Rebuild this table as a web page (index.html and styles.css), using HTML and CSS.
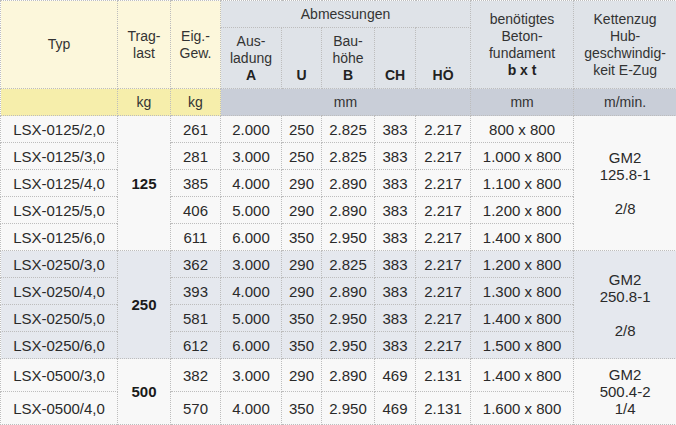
FILE: index.html
```html
<!DOCTYPE html>
<html lang="de">
<head>
<meta charset="utf-8">
<title>LSX Tabelle</title>
<link rel="stylesheet" href="styles.css">
</head>
<body>
<table class="spec">
  <colgroup>
    <col class="c-typ"><col class="c-trag"><col class="c-eig"><col class="c-a"><col class="c-u"><col class="c-b"><col class="c-ch"><col class="c-ho"><col class="c-bxt"><col class="c-kz">
  </colgroup>
  <thead>
    <tr class="h1">
      <th class="y" rowspan="2">Typ</th>
      <th class="y" rowspan="2">Trag-<br>last</th>
      <th class="y" rowspan="2">Eig.-<br>Gew.</th>
      <th class="g" colspan="5">Abmessungen</th>
      <th class="g" rowspan="2">benötigtes<br>Beton-<br>fundament<br><b>b x t</b></th>
      <th class="g" rowspan="2">Kettenzug<br>Hub-<br>geschwindig-<br>keit E-Zug</th>
    </tr>
    <tr class="h2">
      <th class="g bot">Aus-<br>ladung<br><b>A</b></th>
      <th class="g bot"><b>U</b></th>
      <th class="g bot">Bau-<br>höhe<br><b>B</b></th>
      <th class="g bot"><b>CH</b></th>
      <th class="g bot"><b>HÖ</b></th>
    </tr>
    <tr class="units">
      <th class="yu"></th>
      <th class="yu">kg</th>
      <th class="yu">kg</th>
      <th class="gu" colspan="5">mm</th>
      <th class="gu">mm</th>
      <th class="gu">m/min.</th>
    </tr>
  </thead>
  <tbody class="light">
    <tr><td>LSX-0125/2,0</td><td class="tl" rowspan="5">125</td><td>261</td><td>2.000</td><td>250</td><td>2.825</td><td>383</td><td>2.217</td><td>800 x 800</td><td rowspan="5">GM2<br>125.8-1<br><br>2/8</td></tr>
    <tr><td>LSX-0125/3,0</td><td>281</td><td>3.000</td><td>250</td><td>2.825</td><td>383</td><td>2.217</td><td>1.000 x 800</td></tr>
    <tr><td>LSX-0125/4,0</td><td>385</td><td>4.000</td><td>290</td><td>2.890</td><td>383</td><td>2.217</td><td>1.100 x 800</td></tr>
    <tr><td>LSX-0125/5,0</td><td>406</td><td>5.000</td><td>290</td><td>2.890</td><td>383</td><td>2.217</td><td>1.200 x 800</td></tr>
    <tr><td>LSX-0125/6,0</td><td>611</td><td>6.000</td><td>350</td><td>2.950</td><td>383</td><td>2.217</td><td>1.400 x 800</td></tr>
  </tbody>
  <tbody class="tint">
    <tr><td>LSX-0250/3,0</td><td class="tl" rowspan="4">250</td><td>362</td><td>3.000</td><td>290</td><td>2.825</td><td>383</td><td>2.217</td><td>1.200 x 800</td><td rowspan="4">GM2<br>250.8-1<br><br>2/8</td></tr>
    <tr><td>LSX-0250/4,0</td><td>393</td><td>4.000</td><td>290</td><td>2.890</td><td>383</td><td>2.217</td><td>1.300 x 800</td></tr>
    <tr><td>LSX-0250/5,0</td><td>581</td><td>5.000</td><td>350</td><td>2.950</td><td>383</td><td>2.217</td><td>1.400 x 800</td></tr>
    <tr><td>LSX-0250/6,0</td><td>612</td><td>6.000</td><td>350</td><td>2.950</td><td>383</td><td>2.217</td><td>1.500 x 800</td></tr>
  </tbody>
  <tbody class="light tall">
    <tr><td>LSX-0500/3,0</td><td class="tl" rowspan="2">500</td><td>382</td><td>3.000</td><td>290</td><td>2.890</td><td>469</td><td>2.131</td><td>1.400 x 800</td><td rowspan="2">GM2<br>500.4-2<br>1/4</td></tr>
    <tr><td>LSX-0500/4,0</td><td>570</td><td>4.000</td><td>350</td><td>2.950</td><td>469</td><td>2.131</td><td>1.600 x 800</td></tr>
  </tbody>
</table>
</body>
</html>
```

FILE: styles.css
```css
html, body {
  margin: 0;
  padding: 0;
  background: #ffffff;
}

.spec {
  width: 676px;
  table-layout: fixed;
  border-collapse: collapse;
  font-family: "Liberation Sans", Arial, sans-serif;
  color: #2a2a2a;
}

.c-typ { width: 117px; }
.c-trag { width: 53px; }
.c-eig { width: 50px; }
.c-a { width: 61px; }
.c-u { width: 40px; }
.c-b { width: 53px; }
.c-ch { width: 41px; }
.c-ho { width: 55px; }
.c-bxt { width: 103px; }
.c-kz { width: 103px; }

.spec th,
.spec td {
  border: 1px dotted #bdbdbd;
  padding: 0 2px;
  text-align: center;
  vertical-align: middle;
}

.spec th {
  font-size: 14px;
  line-height: 17px;
  font-weight: normal;
  color: #333333;
}

.spec th b {
  font-weight: bold;
  color: #222222;
}

.h1 { height: 27px; }
.h2 { height: 61px; }
.units { height: 27px; }

.spec th.bot {
  vertical-align: bottom;
  padding-bottom: 4px;
}

.y { background: #fcf7db; }
.yu { background: #f6eeab; }
.g { background: #dfe3e8; }
.gu { background: #c9ced8; }

.spec td {
  font-size: 15px;
  line-height: 17px;
  height: 26px;
}

.light td { background: #f8f8f8; }
.tint td { background: #e5e8ee; }

.tall td { height: 32px; }

.spec td.tl {
  font-weight: bold;
  color: #1a1a1a;
}
```
